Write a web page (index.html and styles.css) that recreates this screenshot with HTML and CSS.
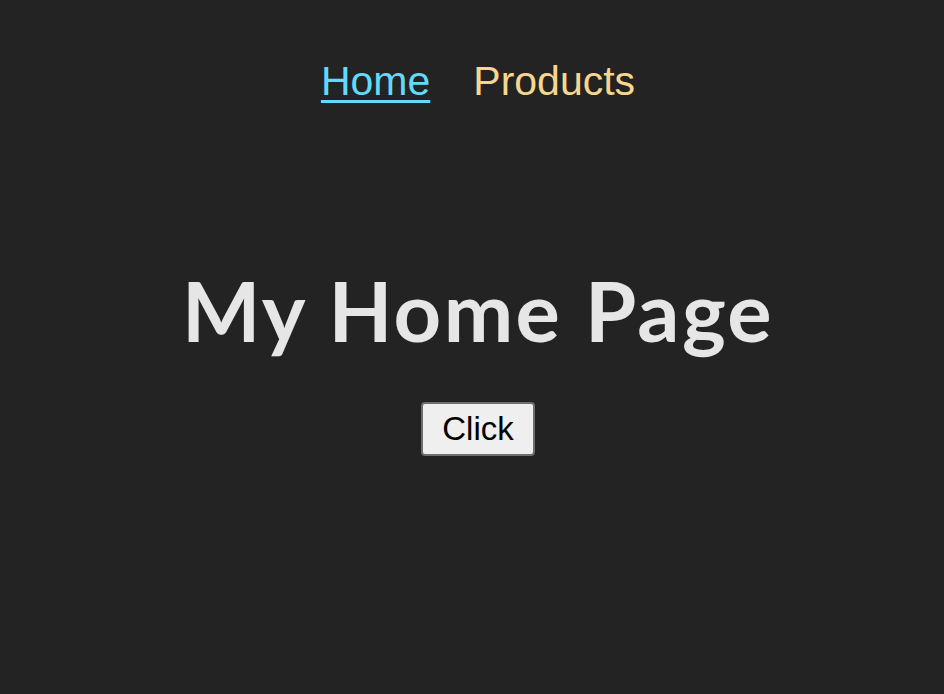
FILE: index.html
```html
<!DOCTYPE html>
<html>
<head>
<meta charset="utf-8">
<link rel="stylesheet" href="styles.css">
</head>
<body>
<nav class="nav">
  <a class="nav-link nav-home" href="#">Home</a>
  <a class="nav-link nav-products" href="#">Products</a>
</nav>
<main class="main">
  <h1 class="title">My Home Page</h1>
  <button class="btn">Click</button>
</main>
</body>
</html>
```

FILE: styles.css
```css
html, body {
  margin: 0;
  padding: 0;
  background: #232323;
  height: 100%;
}
body {
  font-family: "Liberation Sans", Arial, sans-serif;
  padding-left: 12px;
  box-sizing: border-box;
}
.nav {
  display: flex;
  justify-content: center;
  gap: 43px;
  padding-top: 58px;
  font-size: 41px;
  line-height: 47px;
}
.nav-link {
  text-decoration: none;
}
.nav-home {
  color: #61dafb;
  text-decoration: underline;
  text-decoration-thickness: 3px;
  text-underline-offset: 5px;
}
.nav-products {
  color: #f7d68f;
}
.main {
  display: flex;
  flex-direction: column;
  align-items: center;
  padding-top: 155px;
}
.title {
  margin: 0;
  font-family: Lato, "Noto Sans", sans-serif;
  font-weight: 700;
  font-size: 83px;
  line-height: 100px;
  color: #e6e6e6;
  letter-spacing: 2.4px;
}
.btn {
  margin-top: 42px;
  width: 114px;
  height: 54px;
  font-family: "Liberation Sans", Arial, sans-serif;
  font-size: 33px;
  color: #000;
  background: #efefef;
  border: 2px solid #6e6e6e;
  border-radius: 4px;
  padding: 0;
}
```
